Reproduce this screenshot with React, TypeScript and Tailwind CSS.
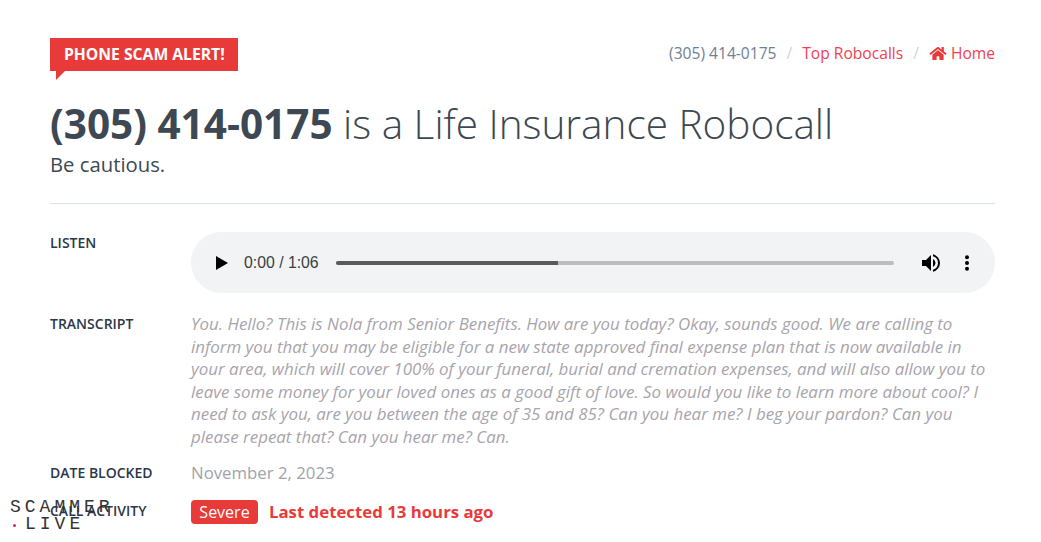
const transcript =
  "You. Hello? This is Nola from Senior Benefits. How are you today? Okay, sounds good. We are calling to inform you that you may be eligible for a new state approved final expense plan that is now available in your area, which will cover 100% of your funeral, burial and cremation expenses, and will also allow you to leave some money for your loved ones as a good gift of love. So would you like to learn more about cool? I need to ask you, are you between the age of 35 and 85? Can you hear me? I beg your pardon? Can you please repeat that? Can you hear me? Can."

function Row({ label, children, className }: { label: string; children: React.ReactNode; className?: string }) {
  return (
    <div className={`flex ${className ?? ""}`}>
      <div className="w-[141px] shrink-0 text-[14px] font-semibold uppercase leading-[22px] text-[#2d3748]">{label}</div>
      <div className="min-w-0 flex-1">{children}</div>
    </div>
  )
}

export default function App() {
  return (
    <div className="relative h-[542px] w-[1041px] overflow-hidden bg-white pl-[50px] pr-[46px] pt-[38px] font-['Open_Sans',sans-serif] text-[#3d4852]">
      <div className="flex items-start justify-between">
        <div className="relative h-[33px] bg-[#e93a3a] pl-[14px] pr-[13px] text-[15.700px] font-bold leading-[33px] text-white">
          PHONE SCAM ALERT!
          <span className="absolute left-[6px] top-[33px] h-0 w-0 border-r-[9px] border-t-[9px] border-r-transparent border-t-[#e93a3a]" />
        </div>
        <nav className="flex h-[31px] items-center text-[15.600px] text-[#718096]">
          <span>(305) 414-0175</span>
          <span className="mx-[10px] text-[#cbd5e0]">/</span>
          <a className="text-[#ef3f4f]">Top Robocalls</a>
          <span className="mx-[10px] text-[#cbd5e0]">/</span>
          <a className="flex items-center text-[#ef3f4f]">
            <svg viewBox="0 0 576 512" className="mr-[4px] h-[15px] w-[18px] fill-[#e93a3a]">
              <path d="M280.4 148.3 96 300.1V464a16 16 0 0 0 16 16l112.100-.3a16 16 0 0 0 15.900-16V368a16 16 0 0 1 16-16h64a16 16 0 0 1 16 16v95.600a16 16 0 0 0 16 16.100L464 480a16 16 0 0 0 16-16V300L295.700 148.300a12.200 12.200 0 0 0-15.300 0zM571.600 251.500 488 182.600V44.100a12 12 0 0 0-12-12h-56a12 12 0 0 0-12 12v72.600L318.500 43a48 48 0 0 0-61 0L4.300 251.500a12 12 0 0 0-1.600 16.900l25.500 31A12 12 0 0 0 45.200 301l235.200-193.700a12.200 12.200 0 0 1 15.300 0L530.900 301a12 12 0 0 0 16.900-1.600l25.500-31a12 12 0 0 0-1.700-16.900z" />
            </svg>
            Home
          </a>
        </nav>
      </div>

      <h1 className="mt-[26px] whitespace-nowrap text-[40.500px] font-light leading-[54px] text-[#3d4852]">
        <span className="font-bold">(305) 414-0175</span> is a Life Insurance Robocall
      </h1>
      <p className="text-[20.300px] leading-[26px] text-[#3d4852]">Be cautious.</p>

      <div className="mt-[26px] border-t border-[#dae1e7]" />

      <Row label="Listen" className="mt-[28px]">
        <div className="flex h-[61px] items-center rounded-[31px] bg-[#f1f3f4] pl-[25px] pr-[16px] font-['Liberation_Sans',sans-serif]">
          <svg viewBox="0 0 12 14" className="h-[14px] w-[12px] shrink-0 fill-black">
            <path d="M0 0 12 7 0 14z" />
          </svg>
          <span className="ml-[16px] w-[75px] shrink-0 whitespace-nowrap text-[15.800px] text-[#3c3f43]">0:00 / 1:06</span>
          <div className="ml-[17px] flex h-[4px] w-[558px] shrink-0 overflow-hidden rounded-full bg-[#bdbdbd]">
            <div className="h-full w-[222px] bg-[#5a5a5a]" />
          </div>
          <svg viewBox="0 0 24 24" className="ml-[25px] h-[24px] w-[24px] shrink-0 fill-black">
            <path d="M3 9v6h4l5 5V4L7 9H3zm13.500 3A4.500 4.500 0 0 0 14 7.970v8.050A4.470 4.470 0 0 0 16.500 12zM14 3.230v2.060a7 7 0 0 1 0 13.420v2.060a9 9 0 0 0 0-17.540z" />
          </svg>
          <svg viewBox="0 0 24 24" className="ml-[12px] h-[24px] w-[24px] shrink-0 fill-black">
            <circle cx="12" cy="6.300" r="2" />
            <circle cx="12" cy="12" r="2" />
            <circle cx="12" cy="17.700" r="2" />
          </svg>
        </div>
      </Row>

      <Row label="Transcript" className="mt-[20px]">
        <p className="text-[16.900px] italic leading-[22.500px] text-[#a8a4ac]">{transcript}</p>
      </Row>

      <Row label="Date Blocked" className="mt-[14px]">
        <p className="text-[16.800px] leading-[22px] text-[#a0a3a9]">November 2, 2023</p>
      </Row>

      <Row label="Call Activity" className="mt-[16px]">
        <div className="flex items-center">
          <span className="flex h-[24px] w-[67px] items-center justify-center rounded-[4px] bg-[#e93a3a] text-[16px] text-white">Severe</span>
          <span className="ml-[11px] text-[16.800px] font-bold leading-[24px] text-[#e93a3a]">Last detected 13 hours ago</span>
        </div>
      </Row>

      <div className="absolute left-[10px] top-[499px] font-['Liberation_Mono',monospace] text-[18px] leading-[17px] text-[#333]">
        <div className="tracking-[4px]">SCAMMER</div>
        <div className="flex items-center tracking-[4px]">
          <span className="ml-[3px] mr-[9px] mt-[2px] h-[3px] w-[3px] rounded-full bg-[#d1245c]" />
          LIVE
        </div>
      </div>
    </div>
  )
}
